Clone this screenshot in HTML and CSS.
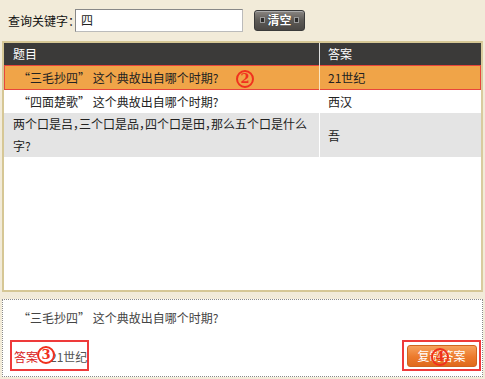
FILE: index.html
```html
<!DOCTYPE html>
<html>
<head>
<meta charset="utf-8">
<link rel="stylesheet" href="styles.css">
</head>
<body>
<div class="search">
  <span class="label">查询关键字：</span>
  <div class="input">四</div>
  <div class="clear-btn"><span class="dot"></span><span class="ct">清空</span><span class="dot"></span></div>
</div>
<div class="panel">
  <div class="grid">
    <div class="hd c1">题目</div>
    <div class="hd c2">答案</div>
    <div class="row sel">
      <div class="c1 q">“三毛抄四” 这个典故出自哪个时期?</div>
      <div class="c2">21世纪</div>
      <span class="mark m2">2</span>
    </div>
    <div class="row">
      <div class="c1 q">“四面楚歌” 这个典故出自哪个时期?</div>
      <div class="c2">西汉</div>
    </div>
    <div class="row grey">
      <div class="c1 multi">两个口是吕，三个口是品，四个口是田，那么五个口是什么字?</div>
      <div class="c2">吾</div>
    </div>
  </div>
</div>
<div class="detail">
  <div class="dq">“三毛抄四” 这个典故出自哪个时期?</div>
  <div class="dfoot">
    <div class="ans box"><span class="red">答案</span><span class="grey-t">：21世纪</span><span class="mark m3">3</span></div>
    <div class="copy box"><div class="copy-btn">复制答案</div><span class="mark m4">4</span></div>
  </div>
</div>
</body>
</html>
```
FILE: styles.css
```css
html, body { margin: 0; padding: 0; }
body {
  width: 485px; height: 379px; overflow: hidden;
  background: #f2ebd9;
  font-family: "Noto Sans CJK SC", "DejaVu Sans", sans-serif;
  font-size: 12px; color: #222;
}
.search {
  display: flex; align-items: center;
  height: 41px; padding-left: 8px; box-sizing: border-box; padding-bottom: 1px;
}
.label { width: 67px; white-space: nowrap; color: #111; }
.input {
  background: #fff;
  border: 1px solid #888; border-color: #888 #bbb #bbb #888;
  line-height: 20px; padding-left: 5px; box-sizing: border-box; width: 168px; height: 23px;
}
.clear-btn {
  margin-left: 11px; width: 51px; height: 21px; box-sizing: border-box;
  border-radius: 3px; border: 1px solid #3a3a3a;
  background: linear-gradient(#8a8682, #5d5a56 50%, #4a4744);
  display: flex; align-items: center; justify-content: center; gap: 2px;
  box-shadow: inset 0 1px 0 #aaa;
}
.clear-btn .ct { color: #fff; font-weight: bold; font-size: 12px; line-height: 12px; text-shadow: 0 0 1px #000; }
.clear-btn .dot { width: 5px; height: 6px; background: #2c2b2a; border: 1px solid #999; box-sizing: border-box; }
.panel {
  margin: 0 2px; height: 251px; box-sizing: border-box;
  border: 2px solid #d6c795; border-right-color: #d9cb9e;
  background: #fff;
}
.grid { display: grid; grid-template-columns: 315px 1fr; position: relative; }
.hd {
  background: #3b3a39; color: #fff; height: 22px; line-height: 22px;
  padding-left: 9px;
}
.hd.c2 { border-left: 1px solid #e0e0e0; padding-left: 8px; }
.row { display: contents; }
.row .c1, .row .c2 { line-height: 23px; }
.row .c2 { border-left: 1px solid #fff; padding-left: 8px; display: flex; align-items: center; }
.q { padding-left: 14px; }
.row.sel .c1, .row.sel .c2 { background: #f0a448; height: 25px; line-height: 25px; }
.row.sel .c1 { box-shadow: inset 1px 1px 0 #e8453c, inset 0 -1px 0 #e8453c; }
.row.sel .c2 { box-shadow: inset -1px 1px 0 #e8453c, inset 0 -1px 0 #e8453c; border-left-color: #fbe4c0; }
.row.grey .c1, .row.grey .c2 { background: #e4e4e4; }
.multi { padding: 0 10px 0 9px; line-height: 22px !important; font-feature-settings: "halt"; }
.mark {
  position: absolute; width: 14px; height: 14px; border-radius: 50%;
  border: 2px solid #f0311e; color: #f0311e; font-weight: bold;
  font-family: "DejaVu Serif", serif; font-size: 13px; line-height: 14px; text-align: center;
}
.m2 { left: 232px; top: 27px; }
.detail {
  margin: 7px 2px 0; height: 78px; box-sizing: border-box;
  border: 1px dotted #8a8a8a; background: #fff; position: relative;
}
.dq { padding: 10px 0 0 15px; color: #444; line-height: 16px; }
.dfoot { display: flex; justify-content: space-between; align-items: flex-end; padding: 14px 1px 0 7px; }
.box { border: 2px solid #ee3a3a; box-sizing: border-box; position: relative; }
.ans { width: 79px; height: 31px; line-height: 30px; padding-left: 2px; white-space: nowrap; }
.red { color: #d82020; }
.grey-t { color: #555; }
.m3 { left: 25px; top: 4px; background: #fff; }
.copy { width: 79px; height: 31px; display: flex; align-items: center; justify-content: center; }
.copy-btn {
  width: 70px; height: 22px; border-radius: 3px; box-sizing: border-box;
  background: linear-gradient(#f6a15c, #ec7a2c 55%, #e06a1c);
  border: 1px solid #d0651e; color: #fff; text-align: center; line-height: 20px;
}
.m4 { left: 27px; top: 6px; }
```
